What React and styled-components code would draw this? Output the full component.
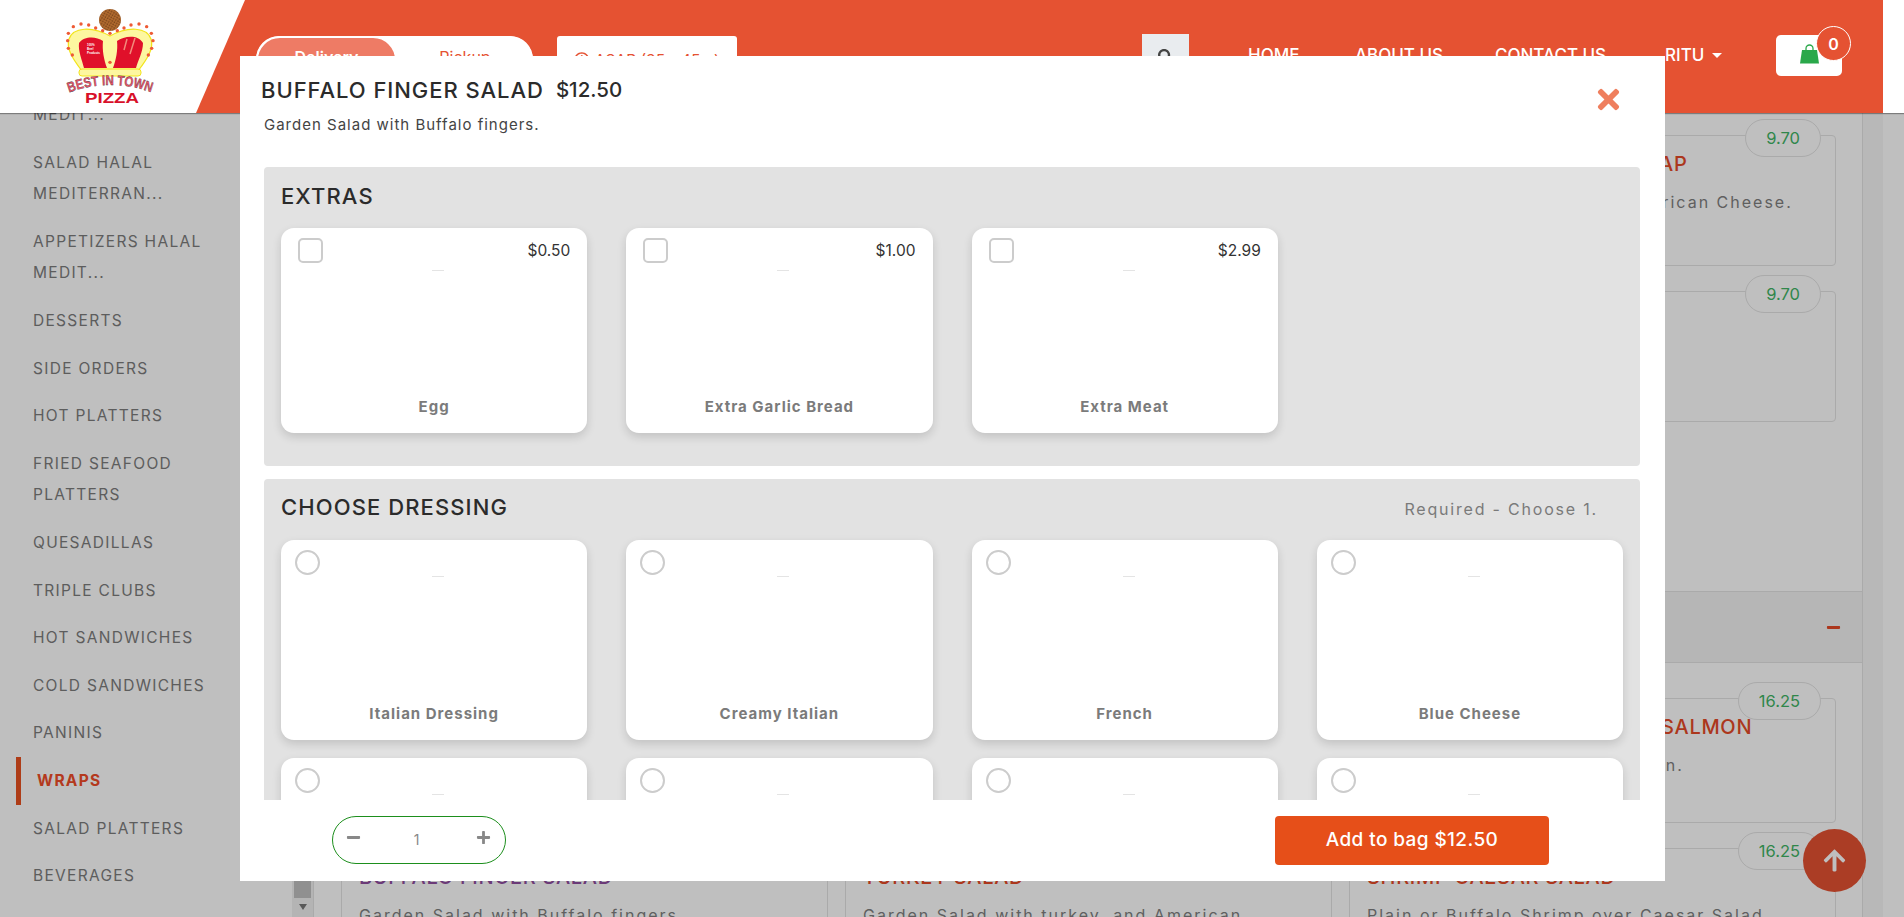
import React from 'react'
import styled, { createGlobalStyle } from 'styled-components'
import { FaTimes, FaMinus, FaPlus, FaArrowUp, FaSearch, FaRegClock } from 'react-icons/fa'

const FONT = `Inter, "Noto Sans", "Liberation Sans", sans-serif`

const GlobalStyle = createGlobalStyle`
    html, body {
        margin: 0;
        height: 100%;
        overflow: hidden;
        background: #fff;
        font-family: ${FONT};
    }
    * { box-sizing: border-box; }
`

const Page = styled.div`
    position: relative;
    width: 1904px;
    height: 917px;
    overflow: hidden;
`

/* ---------- header ---------- */
const Header = styled.header`
    position: relative;
    z-index: 20;
    height: 113px;
    background: #fff;
    box-shadow: 0 1px 1px rgba(0, 0, 0, .35);
`
const HeaderBar = styled.div`
    width: 1883px;
    height: 113px;
    background: #e55232;
    display: flex;
    align-items: flex-start;
`
const LogoZone = styled.div`
    width: 245px;
    height: 113px;
    padding: 8px 0 0 65px;
    background: #fff;
    clip-path: polygon(0 0, 100% 0, 196px 100%, 0 100%);
`
const ModeSwitch = styled.div`
    margin: 36px 0 0 11px;
    width: 277px;
    height: 46px;
    display: flex;
    background: #fff;
    border-radius: 24px;
    overflow: hidden;
    font-size: 16px;
`
const ModeOption = styled.div`
    width: ${p => (p.$active ? '141px' : '136px')};
    padding-top: ${p => (p.$active ? '9px' : '11px')};
    text-align: center;
    color: ${p => (p.$active ? '#fff' : '#e55232')};
    background: ${p => (p.$active ? '#ee7b65' : '#fff')};
    font-weight: ${p => (p.$active ? 600 : 400)};
    border: ${p => (p.$active ? '2px solid #fff' : '0')};
    border-radius: 24px 24px 0 0;
`
const TimeBox = styled.div`
    margin: 36px 0 0 24px;
    width: 180px;
    height: 44px;
    padding-top: 4px;
    background: #fff;
    border-radius: 3px;
    color: #e55232;
    font-size: 15.5px;
    display: flex;
    align-items: center;
    justify-content: center;
    gap: 5px;
`
const SearchBox = styled.div`
    margin: 34px 0 0 405px;
    width: 47px;
    height: 44px;
    background: #e9ecef;
    color: #444;
    font-size: 15px;
    display: flex;
    align-items: center;
    justify-content: center;
`
const Nav = styled.nav`
    margin: 43px 0 0 59px;
    display: flex;
    color: #fff;
    font-size: 17px;
    font-weight: 500;
    line-height: 24px;
`
const NavLink = styled.a`
    width: ${p => p.$w}px;
    white-space: nowrap;
`
const Caret = styled.span`
    display: inline-block;
    margin-left: 8px;
    vertical-align: 3px;
    border-top: 5px solid #fff;
    border-left: 5px solid transparent;
    border-right: 5px solid transparent;
`
const CartButton = styled.div`
    position: relative;
    margin: 35px 0 0 20px;
    width: 66px;
    height: 41px;
    background: #fff;
    border-radius: 5px;
    padding: 9px 0 0 24px;
`
const CartBadge = styled.span`
    position: absolute;
    top: -9px;
    right: -9px;
    width: 35px;
    height: 35px;
    border-radius: 50%;
    border: 1px solid #fff;
    background: #e55232;
    color: #fff;
    font-size: 16px;
    font-weight: 600;
    display: flex;
    align-items: center;
    justify-content: center;
`

/* ---------- page behind the dialog ---------- */
const Body = styled.div`
    display: flex;
    height: 804px;
`
const Sidebar = styled.aside`
    width: 292px;
    overflow: hidden;
`
const SideList = styled.ul`
    list-style: none;
    margin: -22px 0 0;
    padding: 0 0 0 16px;
`
const SideItem = styled.li`
    padding: 8px 0 8px ${p => (p.$active ? '16px' : '17px')};
    line-height: 31.6px;
    font-size: 15.5px;
    letter-spacing: 1.3px;
    color: ${p => (p.$active ? '#f04d28' : '#7c7c7c')};
    font-weight: ${p => (p.$active ? 700 : 400)};
    border-left: ${p => (p.$active ? '5px solid #e8501f' : '0')};
    white-space: pre-line;
`
const ScrollTrack = styled.div`
    width: 22px;
    background: #f1f1f1;
    border-right: 1px solid #e3e3e3;
    display: flex;
    flex-direction: column;
    justify-content: flex-end;
    align-items: center;
    padding-bottom: 7px;
`
const ScrollThumb = styled.div`
    width: 17px;
    height: 60px;
    background: #c1c1c1;
    margin-bottom: 6px;
`
const ScrollArrow = styled.div`
    border-top: 6px solid #777;
    border-left: 4px solid transparent;
    border-right: 4px solid transparent;
`
const Panel = styled.main`
    width: 1549px;
    border-right: 1px solid #e3e3e3;
    padding-top: 22px;
`
const ItemGrid = styled.div`
    display: grid;
    grid-template-columns: repeat(3, 487px);
    column-gap: 17px;
    row-gap: 25px;
    padding-left: 27px;
`
const ItemCard = styled.div`
    position: relative;
    height: ${p => p.$h}px;
    padding: 15px 17px;
    border: 1px solid #e3e3e3;
    border-radius: 4px;
`
const ItemPrice = styled.span`
    position: absolute;
    top: -17px;
    right: 14px;
    height: 38px;
    padding: 0 20px;
    border: 1px solid #e3e3e3;
    border-radius: 19px;
    background: #fff;
    color: #3fb465;
    font-size: 16.5px;
    display: flex;
    align-items: center;
`
const ItemTitle = styled.h4`
    margin: 0 0 13px;
    font-size: 20px;
    line-height: 26px;
    font-weight: 500;
    letter-spacing: .7px;
    white-space: nowrap;
    color: ${p => (p.$picked ? '#8f4ea0' : '#e64a27')};
`
const ItemText = styled.p`
    margin: 0;
    font-size: 16px;
    line-height: 24px;
    letter-spacing: 2px;
    color: #7f7f7f;
    white-space: nowrap;
`
const CategoryBar = styled.div`
    margin: 13px 0 35px;
    height: 72px;
    background: #f3f3f3;
    border-top: 1px solid #e3e3e3;
    border-bottom: 1px solid #e3e3e3;
    display: flex;
    align-items: center;
    justify-content: flex-end;
    padding-right: 21px;
    color: #e64a27;
    font-size: 15px;
`
const RightStrip = styled.div`
    width: 20px;
    background: #f6f6f6;
`
const Backdrop = styled.div`
    position: absolute;
    inset: 0;
    z-index: 10;
    background: rgba(0, 0, 0, .25);
`
const UpButton = styled.div`
    position: absolute;
    right: 38px;
    bottom: 25px;
    width: 63px;
    height: 63px;
    border-radius: 50%;
    background: #e55232;
    color: #fff;
    font-size: 25px;
    display: flex;
    align-items: center;
    justify-content: center;
`

/* ---------- dialog ---------- */
const Modal = styled.div`
    position: absolute;
    z-index: 30;
    left: 240px;
    top: 56px;
    width: 1425px;
    height: 825px;
    background: #fff;
    display: flex;
    flex-direction: column;
`
const ModalHead = styled.div`
    height: 111px;
    padding: 20px 41px 0 21px;
    display: flex;
    justify-content: space-between;
    align-items: flex-start;
`
const TitleRow = styled.div`
    display: flex;
    gap: 12px;
    font-size: 22px;
    line-height: 28px;
    font-weight: 500;
    letter-spacing: .95px;
    color: #2b2b2b;
`
const DishPrice = styled.span`
    font-size: 20.5px;
    letter-spacing: 0;
`
const DishText = styled.p`
    margin: 10px 0 0 3px;
    font-size: 15px;
    line-height: 22px;
    letter-spacing: 1px;
    color: #444;
`
const CloseIcon = styled.span`
    margin-top: 8px;
    color: #ef7f5e;
    font-size: 31px;
    line-height: 1;
`
const ModalScroll = styled.div`
    flex: 1;
    overflow: hidden;
    padding: 0 25px 0 24px;
`
const Section = styled.section`
    background: #e2e2e2;
    border-radius: 4px;
    padding: ${p => p.$top}px 17px ${p => p.$bottom}px;
    margin-bottom: 13px;
`
const SectionHead = styled.div`
    height: 32px;
    margin-bottom: ${p => p.$gap}px;
    display: flex;
    justify-content: space-between;
    align-items: center;
`
const SectionTitle = styled.h3`
    margin: 0;
    font-size: 22px;
    font-weight: 500;
    letter-spacing: 1.1px;
    color: #2b2b2b;
`
const RequiredNote = styled.span`
    margin: 3px 25px 0 0;
    font-size: 16px;
    letter-spacing: 1.8px;
    color: #7a7a7a;
`
const OptionGrid = styled.div`
    display: grid;
    grid-template-columns: repeat(4, 1fr);
    column-gap: 39px;
    row-gap: 18px;
`
const OptionCard = styled.div`
    height: ${p => p.$h}px;
    padding: ${p => (p.$round ? '10px 14px 16px' : '10px 17px 16px')};
    background: #fff;
    border-radius: 13px;
    box-shadow: 0 4px 10px rgba(0, 0, 0, .14);
    display: flex;
    flex-direction: column;
`
const OptionTop = styled.div`
    height: 25px;
    display: flex;
    justify-content: space-between;
    align-items: center;
`
const Tick = styled.span`
    width: 25px;
    height: 25px;
    border: 2px solid #ccc;
    border-radius: ${p => (p.$round ? '50%' : '5px')};
`
const OptionPrice = styled.span`
    font-size: 15.5px;
    color: #333;
`
const BrokenPic = styled.span`
    align-self: center;
    width: 12px;
    height: 1px;
    margin: ${p => (p.$round ? '1px' : '7px')} 0 0 8px;
    background: #e4e4e4;
`
const OptionName = styled.div`
    margin-top: auto;
    text-align: center;
    font-size: 15px;
    line-height: 20px;
    font-weight: 700;
    letter-spacing: 1px;
    color: #7b7b7b;
`
const ModalFoot = styled.div`
    height: 81px;
    padding: 16px 116px 0 92px;
    display: flex;
    justify-content: space-between;
    align-items: flex-start;
    background: #fff;
`
const QtyPill = styled.div`
    width: 174px;
    height: 48px;
    padding: 0 14px 5px 13px;
    border: 1.5px solid #1d8f1d;
    border-radius: 24px;
    display: flex;
    justify-content: space-between;
    align-items: center;
    color: #888;
    font-size: 15px;
`
const QtyValue = styled.span`
    margin: 3px 4px 0 0;
    font-size: 14px;
    color: #888;
`
const AddButton = styled.button`
    width: 274px;
    height: 49px;
    padding: 0 0 3px;
    border: 0;
    border-radius: 4px;
    background: #e64f19;
    color: #fff;
    font-family: ${FONT};
    font-size: 19px;
    font-weight: 500;
    letter-spacing: .4px;
`

const crownDots = [
    [100, 80], [123, 72], [146, 75], [167, 84], [188, 92], [210, 100], [232, 92], [252, 84], [273, 75], [297, 72],
    [320, 80], [334, 100], [339, 122], [335, 145], [325, 165], [85, 100], [83, 122], [85, 145], [97, 165], [210, 187],
]

const Logo = () => (
    <svg width="90" height="96" viewBox="65 8 90 96">
        <defs>
            <pattern id="crumb" width="2.6" height="2.6" patternUnits="userSpaceOnUse" patternTransform="rotate(30)">
                <rect width="2.6" height="2.6" fill="#b06a2e" />
                <circle cx="1" cy="1" r=".7" fill="#6a3a16" />
            </pattern>
        </defs>
        <circle cx="110" cy="20" r="11" fill="url(#crumb)" />
        <path d="M82 71C72 58 66 48 69 39C73 27 92 26 110 36C128 26 147 27 151 39C154 48 148 58 138 71Z" fill="#fdf7a0" stroke="#f2e41c" strokeWidth="1.2" />
        <path d="M79 43C84 36 96 36 103 41C102 50 104 60 107 68L84 68C82 60 78 51 79 43Z" fill="#e0102a" />
        <path d="M117 41C124 36 138 34 143 43C143 52 138 60 136 68L113 68C116 60 118 50 117 41Z" fill="#e0102a" />
        <path d="M127 39L124 50M135 38L130 54" stroke="#f28a7a" strokeWidth="1.5" />
        <text x="87" y="46" fontSize="3" fontWeight="700" fill="#fff" fontFamily="Liberation Sans">100%</text>
        <text x="87" y="50" fontSize="3" fontWeight="700" fill="#fff" fontFamily="Liberation Sans">Beef</text>
        <text x="87" y="54" fontSize="3" fontWeight="700" fill="#fff" fontFamily="Liberation Sans">Products</text>
        <rect x="79" y="69" width="62" height="7" rx="3" fill="#fdf7a0" stroke="#f2e41c" />
        {crownDots.map(([x, y]) => (
            <circle key={`${x}-${y}`} cx={x / 3 + 40} cy={y / 3} r="1.7" fill="#ee5a34" />
        ))}
        <path id="bestArc" d="M69 92.5Q110 77.5 152 92.5" fill="none" />
        <text fontSize="14" fontWeight="700" fill="#ec5368" stroke="#333" strokeWidth=".35" fontFamily="Liberation Sans">
            <textPath href="#bestArc" textLength="84" lengthAdjust="spacingAndGlyphs">BEST IN TOWN</textPath>
        </text>
        <text x="112" y="103" textAnchor="middle" fontSize="14.5" fontWeight="700" textLength="54" lengthAdjust="spacingAndGlyphs" fill="#d8102a" fontFamily="Liberation Sans">PIZZA</text>
    </svg>
)

const CartBag = () => (
    <svg width="19" height="20" viewBox="0 0 19 20">
        <path d="M6 7V4.5a3.5 3.5 0 0 1 7 0V7" fill="none" stroke="#2aa84a" strokeWidth="1.3" />
        <path d="M2 6h15l2 13.5H0Z" fill="#2aa84a" />
    </svg>
)

const sideItems = [
    'MEDIT...', 'SALAD HALAL\nMEDITERRAN...', 'APPETIZERS HALAL\nMEDIT...', 'DESSERTS', 'SIDE ORDERS', 'HOT PLATTERS',
    'FRIED SEAFOOD\nPLATTERS', 'QUESADILLAS', 'TRIPLE CLUBS', 'HOT SANDWICHES', 'COLD SANDWICHES', 'PANINIS', 'WRAPS',
    'SALAD PLATTERS', 'BEVERAGES',
]

const wrapRows = [
    { price: '9.70' }, { price: '9.70' },
    { price: '9.70', title: 'GRILLED CHICKEN CLUB WRAP', text: 'Grilled Chicken, Slaw, and American Cheese.' },
    { price: '9.70' }, { price: '9.70' }, { price: '9.70' }, { price: '9.70' }, { price: '9.70' },
]

const saladRows = [
    { price: '16.25' }, { price: '16.25' },
    { price: '16.25', title: 'CAESAR SALAD WITH COLD SALMON', text: 'Caesar Salad with grilled salmon.' },
    { price: '16.25', title: 'BUFFALO FINGER SALAD', text: 'Garden Salad with Buffalo fingers.', picked: true },
    { price: '16.25', title: 'TURKEY SALAD', text: 'Garden Salad with turkey, and American' },
    { price: '16.25', title: 'SHRIMP CAESAR SALAD', text: 'Plain or Buffalo Shrimp over Caesar Salad' },
]

const extras = [
    { name: 'Egg', price: '$0.50' },
    { name: 'Extra Garlic Bread', price: '$1.00' },
    { name: 'Extra Meat', price: '$2.99' },
]

const dressings = ['Italian Dressing', 'Creamy Italian', 'French', 'Blue Cheese', 'Thousand Island', 'Ranch', 'Russian', 'Balsamic']

const Item = ({ item, height }) => (
    <ItemCard $h={height}>
        <ItemPrice>{item.price}</ItemPrice>
        {item.title && <ItemTitle $picked={item.picked}>{item.title}</ItemTitle>}
        {item.text && <ItemText>{item.text}</ItemText>}
    </ItemCard>
)

const App = () => {
    return (
        <Page>
            <GlobalStyle />
            <Header>
                <HeaderBar>
                    <LogoZone><Logo /></LogoZone>
                    <ModeSwitch>
                        <ModeOption $active>Delivery</ModeOption>
                        <ModeOption>Pickup</ModeOption>
                    </ModeSwitch>
                    <TimeBox><FaRegClock /> ASAP (35 - 45m)</TimeBox>
                    <SearchBox><FaSearch /></SearchBox>
                    <Nav>
                        <NavLink $w={107}>HOME</NavLink>
                        <NavLink $w={140}>ABOUT US</NavLink>
                        <NavLink $w={170}>CONTACT US</NavLink>
                        <NavLink $w={91}>RITU<Caret /></NavLink>
                    </Nav>
                    <CartButton>
                        <CartBag />
                        <CartBadge>0</CartBadge>
                    </CartButton>
                </HeaderBar>
            </Header>
            <Body>
                <Sidebar>
                    <SideList>
                        {sideItems.map(label => (
                            <SideItem key={label} $active={label === 'WRAPS'}>{label}</SideItem>
                        ))}
                    </SideList>
                </Sidebar>
                <ScrollTrack>
                    <ScrollThumb />
                    <ScrollArrow />
                </ScrollTrack>
                <Panel>
                    <ItemGrid>
                        {wrapRows.map((item, i) => <Item key={i} item={item} height={131} />)}
                    </ItemGrid>
                    <CategoryBar><FaMinus /></CategoryBar>
                    <ItemGrid>
                        {saladRows.map((item, i) => <Item key={i} item={item} height={125} />)}
                    </ItemGrid>
                </Panel>
                <RightStrip />
            </Body>
            <UpButton><FaArrowUp /></UpButton>
            <Backdrop />
            <Modal>
                <ModalHead>
                    <div>
                        <TitleRow>BUFFALO FINGER SALAD <DishPrice>$12.50</DishPrice></TitleRow>
                        <DishText>Garden Salad with Buffalo fingers.</DishText>
                    </div>
                    <CloseIcon><FaTimes /></CloseIcon>
                </ModalHead>
                <ModalScroll>
                    <Section $top={13} $bottom={33}>
                        <SectionHead $gap={16}><SectionTitle>EXTRAS</SectionTitle></SectionHead>
                        <OptionGrid>
                            {extras.map(o => (
                                <OptionCard key={o.name} $h={205}>
                                    <OptionTop><Tick /><OptionPrice>{o.price}</OptionPrice></OptionTop>
                                    <BrokenPic />
                                    <OptionName>{o.name}</OptionName>
                                </OptionCard>
                            ))}
                        </OptionGrid>
                    </Section>
                    <Section $top={12} $bottom={17}>
                        <SectionHead $gap={17}>
                            <SectionTitle>CHOOSE DRESSING</SectionTitle>
                            <RequiredNote>Required - Choose 1.</RequiredNote>
                        </SectionHead>
                        <OptionGrid>
                            {dressings.map(name => (
                                <OptionCard key={name} $h={200} $round>
                                    <OptionTop><Tick $round /></OptionTop>
                                    <BrokenPic $round />
                                    <OptionName>{name}</OptionName>
                                </OptionCard>
                            ))}
                        </OptionGrid>
                    </Section>
                </ModalScroll>
                <ModalFoot>
                    <QtyPill><FaMinus /><QtyValue>1</QtyValue><FaPlus /></QtyPill>
                    <AddButton>Add to bag $12.50</AddButton>
                </ModalFoot>
            </Modal>
        </Page>
    )
}

export default App
